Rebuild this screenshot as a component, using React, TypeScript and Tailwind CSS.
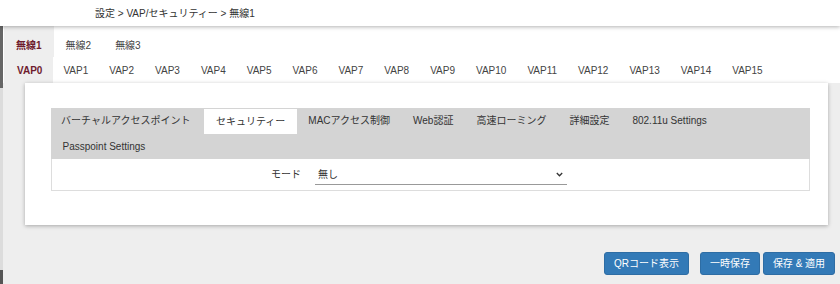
import React, { useState } from 'react';

const radios = ['無線1', '無線2', '無線3'];
const vaps = Array.from({ length: 16 }, (_, i) => `VAP${i}`);
const subTabs = [
  'バーチャルアクセスポイント',
  'セキュリティー',
  'MACアクセス制御',
  'Web認証',
  '高速ローミング',
  '詳細設定',
  '802.11u Settings',
  'Passpoint Settings',
];

const App: React.FC = () => {
  const [radio, setRadio] = useState(0);
  const [vap, setVap] = useState(0);
  const [sub, setSub] = useState(1);
  const [mode, setMode] = useState('none');

  return (
    <div className="h-[284px] w-full bg-[#eeeeee] text-[#333] text-[10px] flex flex-col overflow-hidden font-['Liberation_Sans','Noto_Sans_CJK_JP',sans-serif]">
      {/* Header / breadcrumb */}
      <header className="h-[26px] shrink-0 bg-white flex items-center pl-[95px] relative z-10 shadow-[0_1px_4px_rgba(0,0,0,0.3)]">
        設定 &gt; VAP/セキュリティー &gt; 無線1
      </header>

      <div className="flex flex-1 min-h-0">
        {/* left edge */}
        <div className="w-[3px] shrink-0 flex flex-col">
          <div className="h-[62px] bg-[#666]" />
          <div className="flex-1 bg-[#dcdcdc]" />
          <div className="h-[14px] bg-[#555]" />
        </div>

        <div className="flex-1 flex flex-col min-w-0">
          {/* Radio / VAP tabs */}
          <div className="bg-white pl-[1px]">
            <div className="flex h-[31px]">
              {radios.map((r, i) => (
                <button
                  key={r}
                  onClick={() => setRadio(i)}
                  className={`px-[12px] pt-[7px] flex items-center ${
                    radio === i ? 'bg-[#eeeeee] text-[#6e1c2e] font-bold' : 'text-[#444]'
                  }`}
                >
                  {r}
                </button>
              ))}
            </div>
            <div className="flex h-[26px]">
              {vaps.map((v, i) => (
                <button
                  key={v}
                  onClick={() => setVap(i)}
                  className={`px-[10.5px] flex items-center ${
                    vap === i ? 'bg-[#eeeeee] text-[#6e1c2e] font-bold pl-[13px]' : 'text-[#444]'
                  }`}
                >
                  {v}
                </button>
              ))}
            </div>
          </div>

          {/* Card */}
          <div className="pl-[22px] pr-[12px]">
            <div className="bg-white h-[142px] pt-[25px] pl-[26px] pr-[18px] shadow-[0_1px_4px_rgba(0,0,0,0.3)]">
              <div className="bg-[#d4d4d4] flex flex-wrap">
                {subTabs.map((t, i) => (
                  <button
                    key={t}
                    onClick={() => setSub(i)}
                    className={`h-[25px] flex items-center ${i === 0 ? 'pl-[10px] pr-[14px]' : 'px-[11.5px]'} ${
                      sub === i ? 'bg-white mt-[1px] h-[24px]' : ''
                    }`}
                  >
                    {t}
                  </button>
                ))}
              </div>
              <div className="h-[32px] border-x border-b border-[#dddddd] flex items-center">
                <div className="w-[249px] text-right">モード</div>
                <div className="ml-[14px] relative w-[252px]">
                  <select
                    value={mode}
                    onChange={(e) => setMode(e.target.value)}
                    className="appearance-none w-full h-[21px] bg-transparent border-0 border-b border-[#999] pl-[3px] outline-none text-[10px]"
                  >
                    <option value="none">無し</option>
                    <option value="wpa2">WPA2-PSK</option>
                    <option value="wpa3">WPA3-SAE</option>
                  </select>
                  <svg
                    className="absolute right-[4px] top-[8px] pointer-events-none"
                    width="7"
                    height="5"
                    viewBox="0 0 7 5"
                  >
                    <path d="M0.8 1 L3.5 3.8 L6.2 1" fill="none" stroke="#333" strokeWidth="1.3" />
                  </svg>
                </div>
              </div>
            </div>
          </div>

          {/* Buttons */}
          <div className="flex justify-end mt-[27px] pr-[5px]">
            <button className="h-[23px] w-[85px] mr-[11px] rounded-[3px] bg-[#337ab7] border border-[#2e6da4] text-white">
              QRコード表示
            </button>
            <button className="h-[23px] w-[60px] mr-[3px] rounded-[3px] bg-[#337ab7] border border-[#2e6da4] text-white">
              一時保存
            </button>
            <button className="h-[23px] w-[72px] rounded-[3px] bg-[#337ab7] border border-[#2e6da4] text-white">
              保存 &amp; 適用
            </button>
          </div>
        </div>
      </div>
    </div>
  );
};

export default App;
